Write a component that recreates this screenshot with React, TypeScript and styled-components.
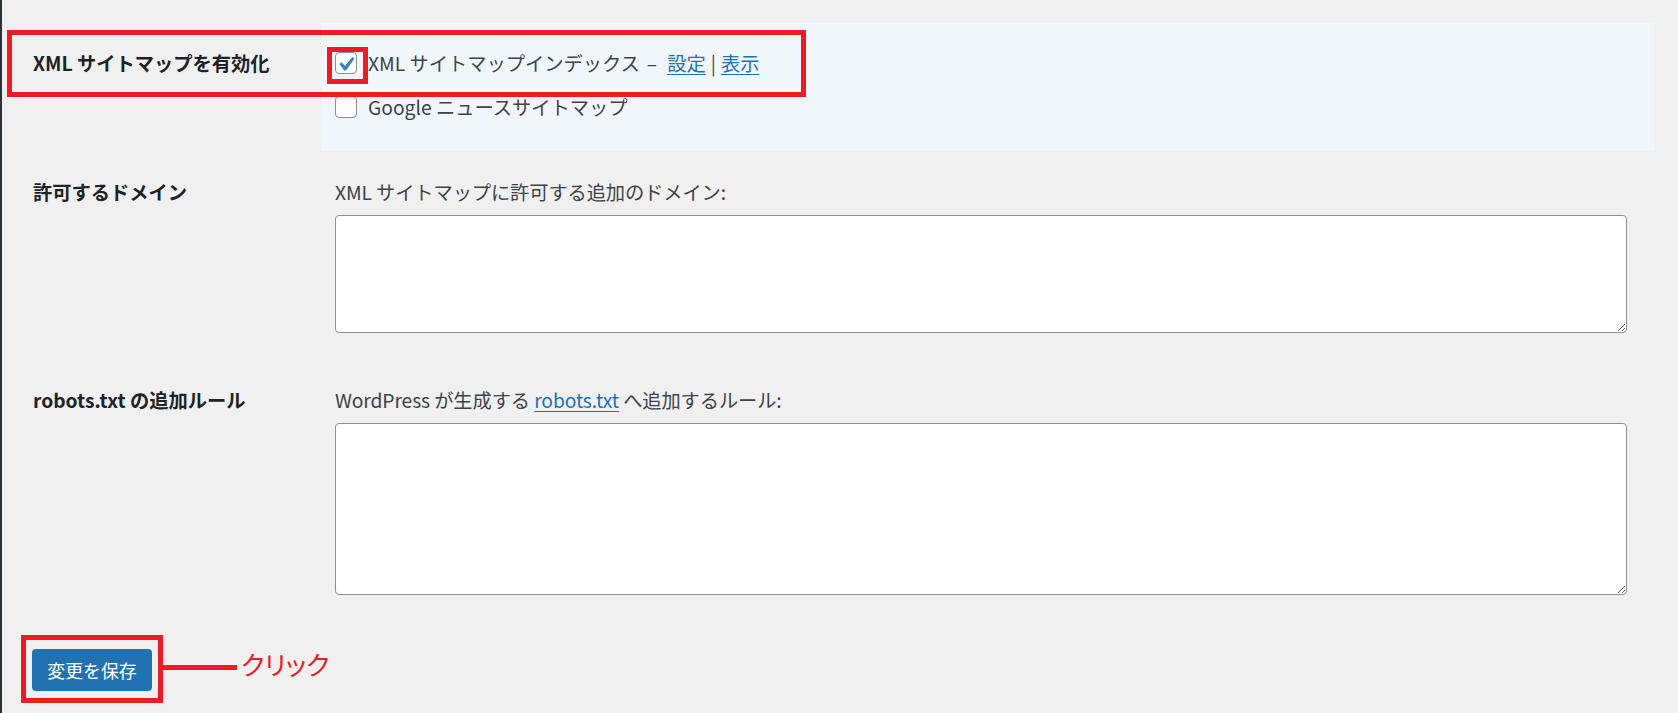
import React from "react";
import styled, { createGlobalStyle } from "styled-components";

const GlobalStyle = createGlobalStyle`
  html, body {
    margin: 0;
    padding: 0;
    background: #f0f0f1;
  }
  body {
    font-family: "Noto Sans CJK JP", "Noto Sans", sans-serif;
    color: #3c434a;
  }
  * { box-sizing: border-box; }
`;

const RED = "#ed1c24";

const Page = styled.div`
  display: flex;
  min-height: 713px;
`;

const SideEdge = styled.div`
  width: 2px;
  flex: none;
  background: #2c3338;
`;

const Main = styled.main`
  flex: 1;
  padding: 23px 24px 0 0;
`;

const Row = styled.div`
  position: relative;
  display: grid;
  grid-template-columns: 319px 1fr;
`;

const Th = styled.div<{ $top: number; $bottom: number }>`
  padding: ${(p) => p.$top}px 0 ${(p) => p.$bottom}px 31px;
  font-size: 19.25px;
  line-height: 26px;
  font-weight: 700;
  color: #1d2327;
`;

const Td = styled.div<{ $highlight?: boolean; $top: number; $bottom: number }>`
  padding: ${(p) => p.$top}px 27px ${(p) => p.$bottom}px 14px;
  background: ${(p) => (p.$highlight ? "#f0f6fc" : "transparent")};
`;

const OptionLine = styled.label`
  display: flex;
  align-items: center;
  height: 44px;
  gap: 11px;
  font-size: 19.25px;
  color: #3c434a;
`;

const Box = styled.span`
  width: 22px;
  height: 22px;
  flex: none;
  border: 1px solid #8c8f94;
  border-radius: 4px;
  background: #fff;
  box-shadow: inset 0 1px 2px rgba(0, 0, 0, 0.1);
  svg {
    display: block;
    width: 29px;
    height: 29px;
    margin: -3px 0 0 -5px;
  }
`;

const Link = styled.a`
  color: #2271b1;
  text-decoration: underline;
  text-underline-offset: 3px;
`;

const Dash = styled.span`
  margin: 0 10px 0 7px;
`;

const Sep = styled.span`
  margin: 0 5px;
`;

const Description = styled.p`
  margin: 0 0 10px;
  font-size: 19.25px;
  line-height: 26px;
  color: #3c434a;
  letter-spacing: -0.1px;
`;

const TextArea = styled.textarea<{ $h: number }>`
  display: block;
  width: 100%;
  height: ${(p) => p.$h}px;
  margin: 0;
  border: 1px solid #8c8f94;
  border-radius: 4px;
  background: #fff;
  font-family: inherit;
  font-size: 16px;
  outline: none;
`;

const Annotation = styled.div`
  position: absolute;
  border: 5px solid ${RED};
  pointer-events: none;
`;

const Submit = styled.div`
  display: flex;
  align-items: center;
  padding: 14px 0 10px 19px;
`;

const Frame = styled.div`
  border: 5px solid ${RED};
  padding: 9px 6px 7px 6px;
`;

const Button = styled.button`
  display: block;
  width: 120px;
  height: 42px;
  border: none;
  border-radius: 4px;
  background: #2271b1;
  color: #fff;
  font-family: "Noto Sans CJK JP", sans-serif;
  font-size: 17.9px;
  padding: 0;
  cursor: pointer;
`;

const Connector = styled.div`
  width: 74px;
  height: 5px;
  background: ${RED};
  margin-bottom: 4px;
`;

const ClickNote = styled.span`
  margin: 0 0 10px 4px;
  font-size: 26px;
  line-height: 30px;
  color: ${RED};
  font-feature-settings: "palt";
`;

const CheckBox: React.FC<{ checked?: boolean }> = ({ checked }) => (
  <Box>
    {checked && (
      <svg viewBox="0 0 20 20">
        <path
          d="M14.83 4.89l1.34.94-5.81 8.38H9.02L5.78 9.67l1.34-1.25 2.57 2.4z"
          fill="#3582c4"
        />
      </svg>
    )}
  </Box>
);

export default function App() {
  return (
    <>
      <GlobalStyle />
      <Page>
        <SideEdge />
        <Main>
          <Row>
            <Th $top={27} $bottom={20}>XML サイトマップを有効化</Th>
            <Td $highlight $top={18} $bottom={22}>
              <OptionLine>
                <CheckBox checked />
                <span>
                  XML サイトマップインデックス<Dash>–</Dash>
                  <Link href="#">設定</Link>
                  <Sep>|</Sep>
                  <Link href="#">表示</Link>
                </span>
              </OptionLine>
              <OptionLine>
                <CheckBox />
                <span>Google ニュースサイトマップ</span>
              </OptionLine>
            </Td>
            <Annotation style={{ left: 5, top: 7, width: 799, height: 67 }} />
            <Annotation style={{ left: 325, top: 24, width: 41, height: 37 }} />
          </Row>
          <Row>
            <Th $top={28} $bottom={26}>許可するドメイン</Th>
            <Td $top={28} $bottom={26}>
              <Description>XML サイトマップに許可する追加のドメイン:</Description>
              <TextArea $h={118} />
            </Td>
          </Row>
          <Row>
            <Th $top={28} $bottom={26}>robots.txt の追加ルール</Th>
            <Td $top={28} $bottom={26}>
              <Description>
                WordPress が生成する <Link href="#">robots.txt</Link> へ追加するルール:
              </Description>
              <TextArea $h={172} />
            </Td>
          </Row>
          <Submit>
            <Frame>
              <Button type="button">変更を保存</Button>
            </Frame>
            <Connector />
            <ClickNote>クリック</ClickNote>
          </Submit>
        </Main>
      </Page>
    </>
  );
}
